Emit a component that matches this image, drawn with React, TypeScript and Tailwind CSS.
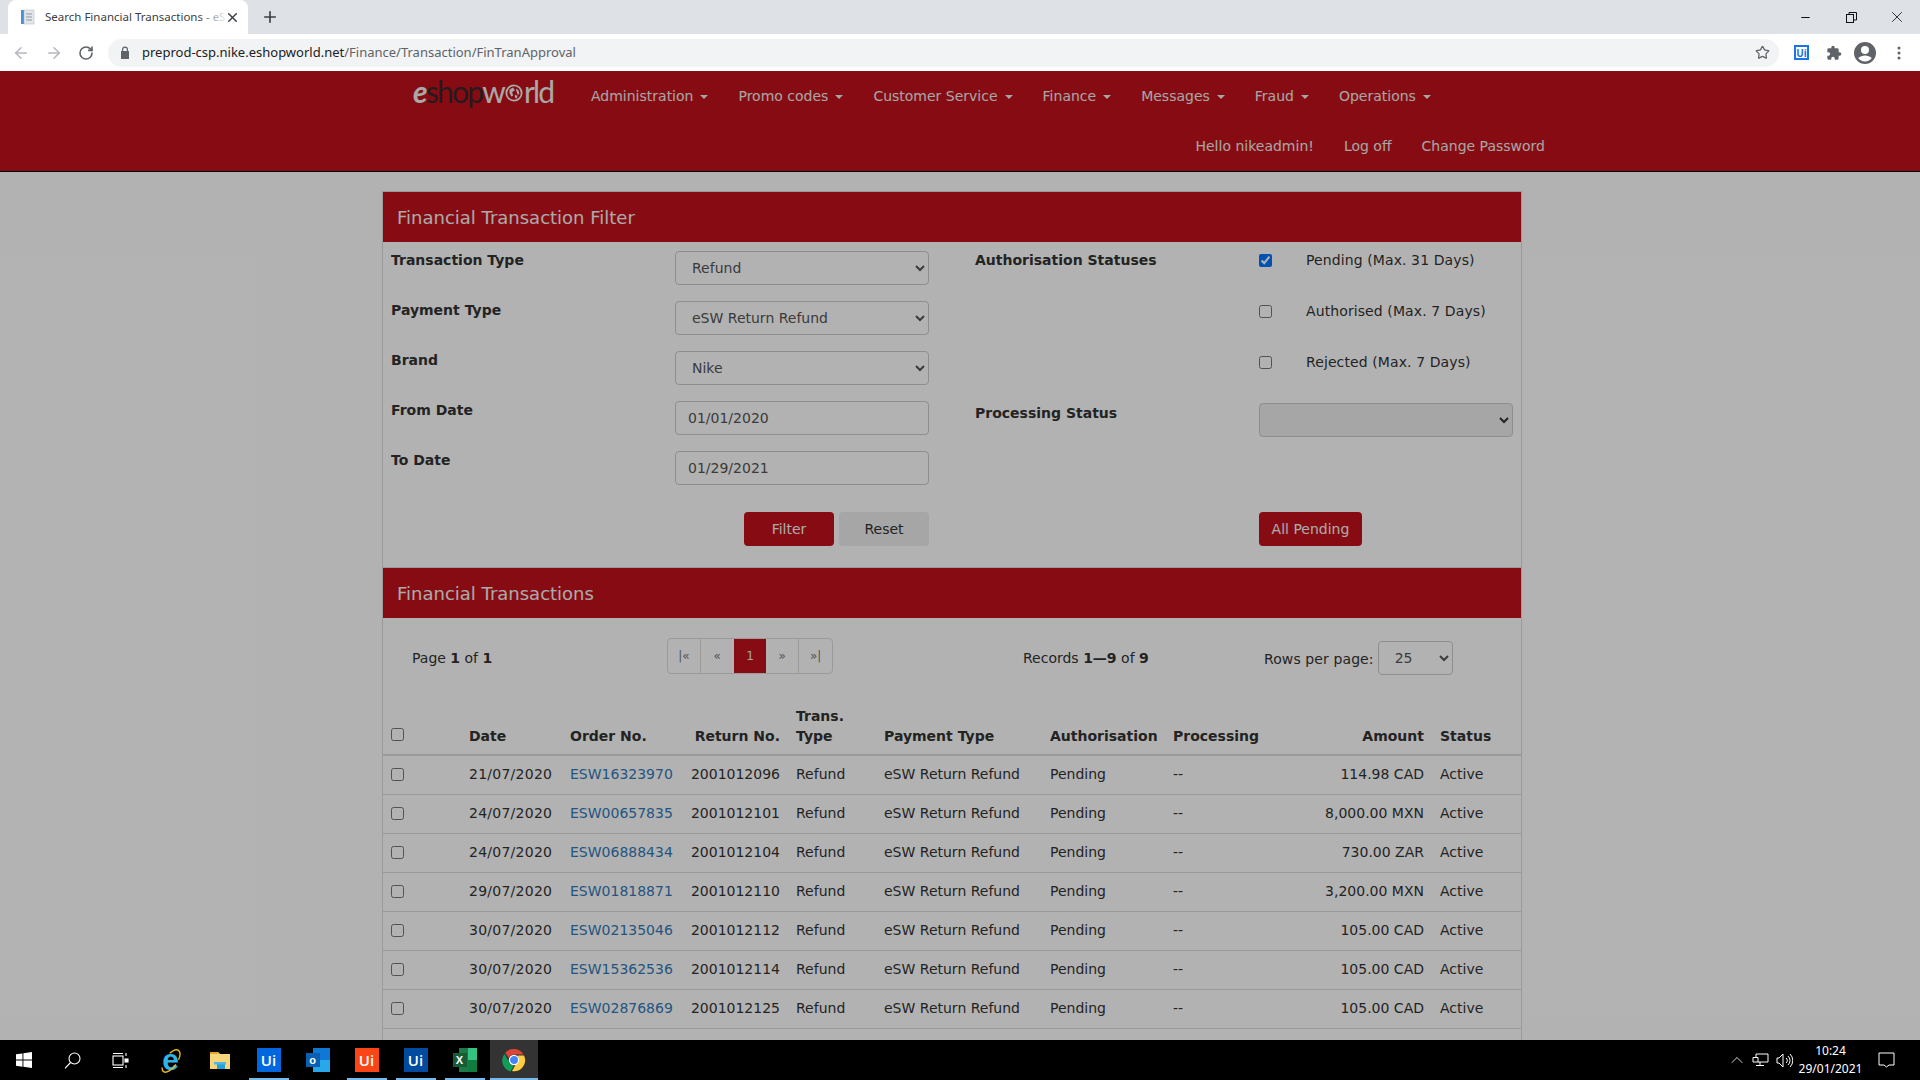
import { Minus, X, Plus, ArrowLeft, ArrowRight, RotateCw, Star, ChevronUp } from "lucide-react";

const navItems = ["Administration", "Promo codes", "Customer Service", "Finance", "Messages", "Fraud", "Operations"];

const rows = [
  ["21/07/2020", "ESW16323970", "2001012096", "114.98 CAD"],
  ["24/07/2020", "ESW00657835", "2001012101", "8,000.00 MXN"],
  ["24/07/2020", "ESW06888434", "2001012104", "730.00 ZAR"],
  ["29/07/2020", "ESW01818871", "2001012110", "3,200.00 MXN"],
  ["30/07/2020", "ESW02135046", "2001012112", "105.00 CAD"],
  ["30/07/2020", "ESW15362536", "2001012114", "105.00 CAD"],
  ["30/07/2020", "ESW02876869", "2001012125", "105.00 CAD"],
];

const selectClass =
  "block w-[254px] h-[34px] mt-px rounded border border-[#ccc] bg-white pl-3 pr-1 text-[14px] text-[#555]";
const inputClass = "block w-[254px] h-[34px] mt-px rounded border border-[#ccc] bg-white px-3 text-[14px] text-[#555]";
const labelClass = "w-[284px] shrink-0 font-bold text-[14px] leading-5 text-[#333]";

function PanelHeader({ title }: { title: string }) {
  return (
    <div className="flex h-[50px] items-center bg-[#c2111a] px-[14px] pt-px text-[18px] text-[#f4f4f4]">{title}</div>
  );
}

function BrowserChrome() {
  return (
    <div className="shrink-0 font-['Noto_Sans',sans-serif]">
      <div className="flex h-[34px] items-end bg-[#dee1e6]">
        <div className="relative ml-2 flex h-[34px] w-[240px] items-center rounded-t-lg bg-white pl-3">
          <svg width="16" height="16" viewBox="0 0 16 16" className="shrink-0">
            <rect x="1" y="1" width="3" height="14" fill="#4a90d9" />
            <rect x="4" y="1" width="10" height="14" fill="#e3e7ec" stroke="#aab4be" strokeWidth="0.5" />
            <path d="M6 5h6M6 8h6M6 11h6" stroke="#8b98a6" strokeWidth="1" />
          </svg>
          <span className="ml-[9px] w-[178px] whitespace-nowrap text-[11.5px] text-[#3c4043]">
            Search Financial Transactions - eS
          </span>
          <div className="absolute left-[190px] top-0 h-full w-[30px] bg-gradient-to-r from-transparent to-white" />
          <X size={15} strokeWidth={2.4} className="relative ml-[2px] text-[#3c4043]" />
        </div>
        <Plus size={18} strokeWidth={2.2} className="mb-[8px] ml-[13px] text-[#3c4043]" />
        <div className="ml-auto flex h-full items-center text-[#111]">
          <div className="flex w-[46px] justify-center">
            <Minus size={13} strokeWidth={2} />
          </div>
          <div className="flex w-[46px] justify-center">
            <svg width="11" height="11" viewBox="0 0 11 11" fill="none" stroke="#111" strokeWidth="1">
              <rect x="0.5" y="2.5" width="7" height="8" />
              <path d="M3 2.5V.5h7.5v7.5H7.5" />
            </svg>
          </div>
          <div className="flex w-[46px] justify-center">
            <X size={18} strokeWidth={1.1} />
          </div>
        </div>
      </div>
      <div className="flex h-[37px] items-center bg-white">
        <ArrowLeft size={18} strokeWidth={2} className="ml-[12px] text-[#b4b7bb]" />
        <ArrowRight size={18} strokeWidth={2} className="ml-[15px] text-[#b4b7bb]" />
        <RotateCw size={16} strokeWidth={2.4} className="ml-[15px] text-[#5f6368]" />
        <div className="ml-[14px] flex h-[28px] w-[1671px] items-center rounded-full bg-[#f1f3f4] pl-[12px]">
          <svg width="10" height="13" viewBox="0 0 10 13" className="shrink-0">
            <path d="M2 5V3.500a3 3 0 0 1 6 0V5h1v8H1V5zm1.200 0h3.600V3.500a1.800 1.800 0 0 0-3.600 0z" fill="#5f6368" />
          </svg>
          <span className="ml-[12px] text-[13px] text-[#202124]">
            preprod-csp.nike.eshopworld.net<span className="text-[#5f6368]">/Finance/Transaction/FinTranApproval</span>
          </span>
          <Star size={15} strokeWidth={2} className="ml-auto mr-[9px] text-[#5f6368]" />
        </div>
        <div className="ml-[15px] flex h-[15px] w-[15px] items-center justify-center border-2 border-[#1a73e8] font-bold text-[10px] leading-none text-[#1a73e8]">
          Ui
        </div>
        <svg width="16" height="16" viewBox="0 0 24 24" className="ml-[17px] shrink-0">
          <path
            d="M20.500 11H19V7a2 2 0 0 0-2-2h-4V3.500a2.500 2.500 0 0 0-5 0V5H4a2 2 0 0 0-2 2v3.800h1.500a2.700 2.700 0 0 1 0 5.400H2V20a2 2 0 0 0 2 2h3.800v-1.500a2.700 2.700 0 0 1 5.400 0V22H17a2 2 0 0 0 2-2v-4h1.500a2.500 2.500 0 0 0 0-5z"
            fill="#5f6368"
          />
        </svg>
        <svg width="24" height="24" viewBox="0 0 24 24" className="ml-[11px] shrink-0">
          <path
            d="M12 1a11 11 0 1 0 0 22 11 11 0 0 0 0-22zm0 4a4 4 0 1 1 0 8 4 4 0 0 1 0-8zm0 15.500a8.600 8.600 0 0 1-6.800-3.400c1.600-1.700 4.200-2.600 6.800-2.600s5.200.9 6.800 2.600a8.600 8.600 0 0 1-6.800 3.400z"
            fill="#5f6368"
          />
        </svg>
        <svg width="4" height="14" viewBox="0 0 4 14" className="ml-[20px] shrink-0">
          <circle cx="2" cy="2" r="1.500" fill="#5f6368" />
          <circle cx="2" cy="7" r="1.500" fill="#5f6368" />
          <circle cx="2" cy="12" r="1.500" fill="#5f6368" />
        </svg>
      </div>
    </div>
  );
}

function Logo() {
  return (
    <div className="-mt-[10px] flex h-[38px] w-[160px] items-center whitespace-nowrap font-['Lato',sans-serif] text-[30px] font-normal leading-none tracking-[-1.8px]">
      <span className="font-bold italic text-[#f2f2f2]">e</span>
      <span className="text-[#33282b]">shop</span>
      <span className="text-[#f2f2f2]">w</span>
      <svg width="18" height="18" viewBox="0 0 20 20" className="mx-[1px] mt-[4px] shrink-0">
        <circle cx="10" cy="10" r="8.500" fill="none" stroke="#f2f2f2" strokeWidth="2" />
        <path d="M5 6l4-2 2 3-3 2 1 4-2 1-2-4zM12 5l3 2 1 4-2 1-1-3zM11 12l3 1-1 3-2-1z" fill="#f2f2f2" />
      </svg>
      <span className="text-[#f2f2f2]">rld</span>
    </div>
  );
}

function SiteHeader() {
  return (
    <header className="h-[101px] border-b border-black bg-[#c2111a] text-[14px] text-[#eee]">
      <div className="mx-auto w-[1170px]">
        <div className="flex h-[50px] items-center pl-[38px]">
          <Logo />
          <nav className="ml-[3px] flex items-center">
            {navItems.map((item) => (
              <span key={item} className="flex items-center whitespace-nowrap px-[15px]">
                {item}
                <span className="ml-[7px] mt-[2px] border-x-4 border-t-4 border-x-transparent border-t-[#eee]" />
              </span>
            ))}
          </nav>
        </div>
        <div className="-mr-[15px] flex h-[50px] items-center justify-end">
          <span className="px-[15px]">Hello nikeadmin!</span>
          <span className="px-[15px]">Log off</span>
          <span className="px-[15px]">Change Password</span>
        </div>
      </div>
    </header>
  );
}

function FilterForm() {
  return (
    <div className="flex pt-2 pb-[21px] text-[14px] text-[#333]">
      <div className="w-[592px] shrink-0 pl-2">
        <div className="flex h-[50px]">
          <span className={labelClass}>Transaction Type</span>
          <select className={selectClass} defaultValue="Refund">
            <option>Refund</option>
          </select>
        </div>
        <div className="flex h-[50px]">
          <span className={labelClass}>Payment Type</span>
          <select className={selectClass} defaultValue="eSW Return Refund">
            <option>eSW Return Refund</option>
          </select>
        </div>
        <div className="flex h-[50px]">
          <span className={labelClass}>Brand</span>
          <select className={selectClass} defaultValue="Nike">
            <option>Nike</option>
          </select>
        </div>
        <div className="flex h-[50px]">
          <span className={labelClass}>From Date</span>
          <input className={inputClass} defaultValue="01/01/2020" />
        </div>
        <div className="flex h-[50px]">
          <span className={labelClass}>To Date</span>
          <input className={inputClass} defaultValue="01/29/2021" />
        </div>
        <div className="mt-3 flex w-[538px] justify-end gap-[5px]">
          <button className="h-[34px] w-[90px] rounded bg-[#c2111a] text-[#f4f4f4]">Filter</button>
          <button className="h-[34px] w-[90px] rounded bg-[#eee] text-[#333]">Reset</button>
        </div>
      </div>
      <div>
        <div className="flex h-[51px]">
          <span className={labelClass}>Authorisation Statuses</span>
          <div className="flex h-5 items-center gap-[34px]">
            <input type="checkbox" defaultChecked className="m-0 h-[13px] w-[13px]" />
            <span className="tracking-[0.1px]">Pending (Max. 31 Days)</span>
          </div>
        </div>
        <div className="flex h-[51px] pl-[284px]">
          <div className="flex h-5 items-center gap-[34px]">
            <input type="checkbox" className="m-0 h-[13px] w-[13px]" />
            <span className="tracking-[0.1px]">Authorised (Max. 7 Days)</span>
          </div>
        </div>
        <div className="flex h-[51px] pl-[284px]">
          <div className="flex h-5 items-center gap-[34px]">
            <input type="checkbox" className="m-0 h-[13px] w-[13px]" />
            <span className="tracking-[0.1px]">Rejected (Max. 7 Days)</span>
          </div>
        </div>
        <div className="flex h-[109px]">
          <span className={labelClass}>Processing Status</span>
          <select disabled className="block h-[34px] w-[254px] rounded border border-[#ccc] bg-[#eee] pl-3 pr-1" />
        </div>
        <div className="pl-[284px]">
          <button className="h-[34px] w-[103px] rounded bg-[#c2111a] text-[#f4f4f4]">All Pending</button>
        </div>
      </div>
    </div>
  );
}

function Pager() {
  return (
    <div className="flex h-[80px] items-center text-[14px] text-[#333]">
      <div className="w-[284px] shrink-0 pl-[29px]">
        Page <b>1</b> of <b>1</b>
      </div>
      <div className="w-[356px] shrink-0">
        <div className="-mt-1 flex h-[36px] w-[166px] overflow-hidden rounded border border-[#ddd] text-[12px] text-[#777]">
          <span className="flex w-[33px] items-center justify-center border-r border-[#ddd]">|«</span>
          <span className="flex w-[33px] items-center justify-center">«</span>
          <span className="flex w-[33px] items-center justify-center bg-[#c2111a] text-[#eee]">1</span>
          <span className="flex w-[33px] items-center justify-center border-r border-[#ddd]">»</span>
          <span className="flex w-[33px] items-center justify-center">»|</span>
        </div>
      </div>
      <div className="w-[241px] shrink-0">
        Records <b>1—9</b> of <b>9</b>
      </div>
      <div className="flex items-center">
        <span className="mt-[2px] tracking-[0.1px]">Rows per page:</span>
        <select className="ml-[4px] h-[34px] w-[75px] rounded border border-[#ccc] bg-white pl-3 text-[#555]" defaultValue="25">
          <option>25</option>
        </select>
      </div>
    </div>
  );
}

function TransactionsTable() {
  return (
    <table className="w-full table-fixed border-collapse text-[14px] leading-5 text-[#333]">
      <colgroup>
        <col className="w-[78px]" />
        <col className="w-[101px]" />
        <col className="w-[119px]" />
        <col className="w-[107px]" />
        <col className="w-[88px]" />
        <col className="w-[166px]" />
        <col className="w-[123px]" />
        <col className="w-[106px]" />
        <col className="w-[161px]" />
        <col />
      </colgroup>
      <thead>
        <tr className="border-b-2 border-[#ddd] font-bold">
          <th className="p-2 pb-[13px] text-left align-bottom font-bold">
            <input type="checkbox" className="m-0 block h-[13px] w-[13px]" />
          </th>
          <th className="p-2 text-left align-bottom font-bold">Date</th>
          <th className="p-2 text-left align-bottom font-bold">Order No.</th>
          <th className="p-2 text-right align-bottom font-bold whitespace-nowrap">Return No.</th>
          <th className="p-2 text-left align-bottom font-bold">
            Trans.
            <br />
            Type
          </th>
          <th className="p-2 text-left align-bottom font-bold">Payment Type</th>
          <th className="p-2 text-left align-bottom font-bold">Authorisation</th>
          <th className="p-2 text-left align-bottom font-bold">Processing</th>
          <th className="p-2 text-right align-bottom font-bold">Amount</th>
          <th className="p-2 text-left align-bottom font-bold">Status</th>
        </tr>
      </thead>
      <tbody>
        {rows.map(([date, order, ret, amount]) => (
          <tr key={order} className="h-[39px] border-b border-[#ddd]">
            <td className="px-2">
              <input type="checkbox" className="m-0 block h-[13px] w-[13px]" />
            </td>
            <td className="px-2 pb-[2px] tracking-[0.25px]">{date}</td>
            <td className="px-2 pb-[2px] text-[#337ab7]">{order}</td>
            <td className="px-2 pb-[2px] text-right">{ret}</td>
            <td className="px-2 pb-[2px]">Refund</td>
            <td className="px-2 pb-[2px] whitespace-nowrap">eSW Return Refund</td>
            <td className="px-2 pb-[2px]">Pending</td>
            <td className="px-2 pb-[2px]">--</td>
            <td className="px-2 pb-[2px] text-right whitespace-nowrap">{amount}</td>
            <td className="px-2 pb-[2px]">Active</td>
          </tr>
        ))}
      </tbody>
    </table>
  );
}

function UiTile({ bg }: { bg: string }) {
  return (
    <div className={`flex h-6 w-6 items-center justify-center font-['Open_Sans',sans-serif] text-[15px] font-semibold text-white ${bg}`}>
      Ui
    </div>
  );
}

function Taskbar() {
  return (
    <footer className="flex h-10 shrink-0 items-center bg-black text-white">
      <div className="flex h-full w-12 items-center justify-center">
        <svg width="16" height="16" viewBox="0 0 16 16" fill="#fff">
          <path d="M0 2.300l6.500-.9v6.200H0zM7.400 1.300L16 0v7.600H7.400zM0 8.500h6.500v6.200L0 13.800zM7.400 8.500H16V16l-8.600-1.200z" />
        </svg>
      </div>
      <div className="flex h-full w-12 items-center justify-center">
        <svg width="17" height="17" viewBox="0 0 17 17" fill="none" stroke="#fff" strokeWidth="1.100">
          <circle cx="10.500" cy="6.500" r="5.500" />
          <path d="M6.600 10.500L1 16.300" />
        </svg>
      </div>
      <div className="flex h-full w-12 items-center justify-center">
        <svg width="17" height="17" viewBox="0 0 17 17" fill="none" stroke="#fff" strokeWidth="1.100">
          <rect x="1" y="4" width="10" height="9" />
          <path d="M1 1.500h10M1 15.500h10M14 1v3M14 13v3" />
          <rect x="13" y="7" width="3" height="3" fill="#fff" />
        </svg>
      </div>
      <div className="ml-[2px] flex h-full w-[49px] items-center justify-center">
        <div className="relative flex h-6 w-6 items-center justify-center">
          <span className="font-['Liberation_Sans',sans-serif] text-[30px] font-bold leading-none text-[#2fb4ea]">e</span>
          <svg width="26" height="26" viewBox="0 0 26 26" fill="none" className="absolute inset-0">
            <ellipse cx="12" cy="13" rx="6" ry="13" transform="rotate(35 12 13)" stroke="#e8b51c" strokeWidth="1.400" strokeDasharray="20 16" />
          </svg>
        </div>
      </div>
      <div className="flex h-full w-[49px] items-center justify-center">
        <svg width="22" height="22" viewBox="0 0 22 22">
          <path d="M1 3h8l2 2h10v15H1z" fill="#f6d67a" />
          <path d="M1 3h8l2 2H1z" fill="#dfa72c" />
          <rect x="8" y="15" width="8" height="5" fill="#2a9fd6" />
          <rect x="5" y="13" width="12" height="2.500" fill="#4ab7e8" />
        </svg>
      </div>
      <div className="flex h-full w-[49px] flex-col items-center">
        <div className="flex flex-1 items-center justify-center pt-[2px]">
          <UiTile bg="bg-[#0067df]" />
        </div>
        <div className="h-[2px] w-10 bg-[#76b9ed]" />
      </div>
      <div className="flex h-full w-[49px] items-center justify-center">
        <div className="relative h-6 w-6">
          <div className="absolute right-0 top-0 h-full w-[17px] bg-[#0f78d4]" />
          <div className="absolute right-0 top-[12px] h-3 w-[17px] bg-[#28a8ea]" />
          <div className="absolute left-0 top-[5px] flex h-[14px] w-[14px] items-center justify-center bg-[#0a5fb0] font-['Liberation_Sans',sans-serif] text-[11px] font-bold text-white">
            o
          </div>
        </div>
      </div>
      <div className="flex h-full w-[49px] flex-col items-center">
        <div className="flex flex-1 items-center justify-center pt-[2px]">
          <UiTile bg="bg-[#fa4616]" />
        </div>
        <div className="h-[2px] w-10 bg-[#76b9ed]" />
      </div>
      <div className="flex h-full w-[49px] flex-col items-center">
        <div className="flex flex-1 items-center justify-center pt-[2px]">
          <UiTile bg="bg-[#004a9f]" />
        </div>
        <div className="h-[2px] w-10 bg-[#76b9ed]" />
      </div>
      <div className="flex h-full w-[49px] flex-col items-center">
        <div className="flex flex-1 items-center justify-center pt-[2px]">
          <div className="relative h-6 w-6">
            <div className="absolute right-0 top-0 h-full w-[18px] bg-[#1d7a45]" />
            <div className="absolute right-0 top-0 h-3 w-[9px] bg-[#33c481]" />
            <div className="absolute bottom-0 right-0 h-3 w-[9px] bg-[#107c41]" />
            <div className="absolute left-0 top-[5px] flex h-[14px] w-[14px] items-center justify-center bg-[#185c37] font-['Liberation_Sans',sans-serif] text-[11px] font-bold text-white">
              X
            </div>
          </div>
        </div>
        <div className="h-[2px] w-10 bg-[#76b9ed]" />
      </div>
      <div className="ml-[1px] flex h-full w-12 flex-col items-center bg-[#333]">
        <div className="flex flex-1 items-center justify-center pt-[2px]">
          <svg width="24" height="24" viewBox="0 0 24 24">
            <path d="M12 1a11 11 0 0 1 9.500 5.500H12a5.500 5.500 0 0 0-5.200 3.700L3.200 4.700A11 11 0 0 1 12 1z" fill="#db4437" />
            <path d="M2.500 6l4.700 8.200A5.500 5.500 0 0 0 12 17.500l-3.500 5.900A11 11 0 0 1 2.500 6z" fill="#0f9d58" />
            <path d="M22 7.500A11 11 0 0 1 10 23l4.600-7.900a5.500 5.500 0 0 0 .9-7.600z" fill="#ffcd40" />
            <circle cx="12" cy="12" r="4.600" fill="#4285f4" stroke="#fff" strokeWidth="1.200" />
          </svg>
        </div>
        <div className="h-[2px] w-full bg-[#76b9ed]" />
      </div>
      <ChevronUp size={20} strokeWidth={1} className="ml-auto text-white" />
      <svg width="17" height="14" viewBox="0 0 17 14" fill="none" stroke="#fff" strokeWidth="1" className="ml-[5px] shrink-0">
        <path d="M4 4.500V1h12v8H1V4.500h5V9M8 9v3M4 12.500h8" />
      </svg>
      <svg width="17" height="15" viewBox="0 0 17 15" fill="none" stroke="#fff" strokeWidth="1" className="ml-[7px] shrink-0">
        <path d="M1 5h2l4-4v13l-4-4H1zM10 5a3 3 0 0 1 0 5M12 3a6 6 0 0 1 0 9M14 1a9 9 0 0 1 0 13" />
      </svg>
      <div className="ml-[8px] flex w-[59px] flex-col items-center font-['Noto_Sans',sans-serif] text-[12px] leading-[18px]">
        <span>10:24</span>
        <span>29/01/2021</span>
      </div>
      <svg width="17" height="16" viewBox="0 0 17 16" fill="none" stroke="#fff" strokeWidth="1" className="ml-[18px] mr-[25px] shrink-0">
        <path d="M1 1h15v12h-5l-2.500 2-2.500-2H1z" />
      </svg>
    </footer>
  );
}

export default function App() {
  return (
    <div className="flex h-screen flex-col overflow-hidden font-['DejaVu_Sans',sans-serif]">
      <BrowserChrome />
      <div className="relative min-h-0 flex-1 overflow-hidden bg-white">
        <SiteHeader />
        <div className="mx-auto w-[1170px] pl-[7px] pt-[19px]">
          <div className="w-[1140px] border border-[#ddd] pb-[60px]">
            <PanelHeader title="Financial Transaction Filter" />
            <FilterForm />
            <div className="h-px bg-[#ddd]" />
            <PanelHeader title="Financial Transactions" />
            <Pager />
            <TransactionsTable />
          </div>
        </div>
        <div className="absolute inset-0 bg-black/30" />
      </div>
      <Taskbar />
    </div>
  );
}
